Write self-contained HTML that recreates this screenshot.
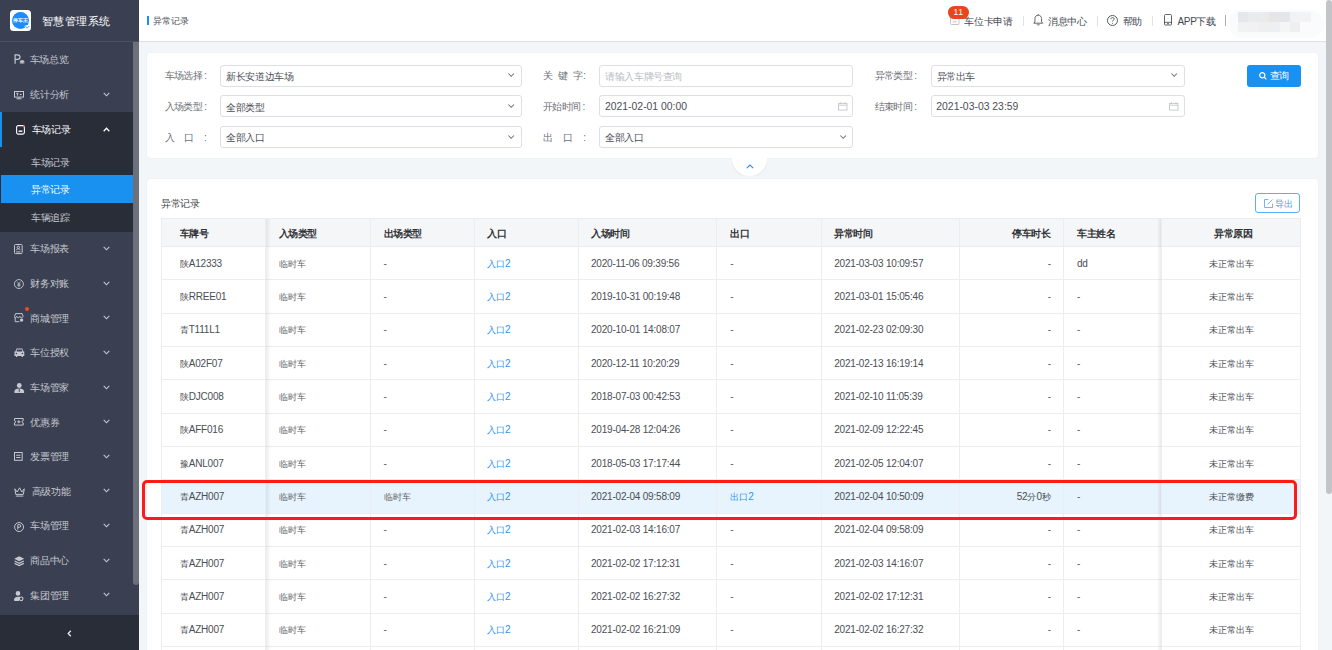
<!DOCTYPE html><html><head><meta charset="utf-8"><title>异常记录</title><style>
*{box-sizing:border-box;margin:0;padding:0}
html,body{width:1332px;height:650px;overflow:hidden;background:#f3f6f9;font-family:"Liberation Sans",sans-serif;}
.a{position:absolute}
.t{position:absolute;white-space:nowrap;line-height:1}
svg{position:absolute;overflow:visible}
.b{font-weight:bold}
</style></head><body>
<div class="a" style="left:0;top:0;width:139px;height:650px;background:#3a3f51"></div>
<div class="a" style="left:0;top:41px;width:139px;height:1px;background:#4b5163"></div>
<div class="a" style="left:10px;top:10px;width:21px;height:21px;background:#fff;border-radius:3.5px"></div>
<div class="a" style="left:11.6px;top:11.6px;width:17.8px;height:17.8px;background:#1a8cff;border-radius:50%"></div>
<div class="t b" style="left:13.2px;top:18.4px;font-size:5px;color:#fff;letter-spacing:-0.1px">停车王</div>
<svg style="left:24.2px;top:24px" width="6.5" height="6" viewBox="0 0 6.5 6"><path d="M0.3 2.2C1.5 0.8 5 0.8 6.2 2.2L3.25 5.8z" fill="#fff"/><path d="M1.2 1.9l2.05 2.3 2.05-2.3" stroke="#1a8cff" stroke-width=".8" fill="none"/></svg>
<div class="t " style="left:42.00px;top:15.77px;font-size:11px;color:#ffffff;letter-spacing:0.48px;">智慧管理系统</div>
<div class="a" style="left:0;top:111.5px;width:139px;height:120.3px;background:#292d38"></div>
<div class="a" style="left:0;top:111.5px;width:1.6px;height:35.3px;background:#1991f0"></div>
<div class="a" style="left:1.2px;top:175px;width:132px;height:28px;background:#1991f0"></div>
<div class="a" style="left:0;top:614.8px;width:139px;height:35.2px;background:#292d38"></div>
<svg style="left:67px;top:629.5px" width="5" height="7" viewBox="0 0 5 7"><path d="M3.8 0.8L1.2 3.5l2.6 2.7" stroke="#e8eaee" stroke-width="1.3" fill="none"/></svg>
<div class="a" style="left:133px;top:42px;width:6px;height:543px;background:#6c707b;border-radius:0 0 3px 3px"></div>
<div class="t " style="left:29.60px;top:54.80px;font-size:10px;color:#c6c9d0;letter-spacing:-0.33px;">车场总览</div>
<svg style="left:14px;top:54px" width="10.5" height="10" viewBox="0 0 10.5 10" fill="none" stroke="#c6c9d0" stroke-width="1"><path d="M1.1 9.8V0.8h2.6a2.3 2.3 0 0 1 0 4.6H1.1" stroke-width="1.2"/><path d="M5.9 9.6V7.6l0.7-1.4h3l0.7 1.4v2z" fill="#c6c9d0" stroke="none"/><circle cx="6.9" cy="8.2" r=".45" fill="#3a3f51" stroke="none"/><circle cx="9.3" cy="8.2" r=".45" fill="#3a3f51" stroke="none"/></svg>
<div class="t " style="left:30.40px;top:90.25px;font-size:10px;color:#c6c9d0;letter-spacing:-0.33px;">统计分析</div>
<svg style="left:13.9px;top:90.8px" width="10" height="8.4" viewBox="0 0 10 8.4" fill="none" stroke="#c6c9d0" stroke-width="1"><rect x="0.5" y="0.5" width="9" height="5.6"/><path d="M2.3 2.3h2.2M3.4 2.3v2.4M5.8 3.5h1.8M5 6.1v1.6M2.5 7.8h5"/></svg>
<svg style="left:103px;top:92.0px" width="7" height="5" viewBox="0 0 7 5"><path d="M0.7 0.9L3.5 3.8l2.8-2.9" stroke="#c6c9d0" stroke-width="1.1" fill="none"/></svg>
<div class="t " style="left:31.80px;top:125.00px;font-size:10px;color:#ffffff;letter-spacing:-0.33px;">车场记录</div>
<svg style="left:16.2px;top:124.7px" width="9" height="9.7" viewBox="0 0 9 9.7" fill="none" stroke="#ffffff" stroke-width="1"><rect x="0.6" y="0.6" width="7.8" height="8.5" rx="1.6" stroke-width="1.1"/><path d="M2.6 6.2h3.8" stroke-width="1.4"/><circle cx="7.6" cy="1.4" r="1" fill="#e05a6a" stroke="none"/></svg>
<svg style="left:103px;top:127.2px" width="7" height="5" viewBox="0 0 7 5"><path d="M0.7 4.2L3.5 1.3l2.8 2.9" stroke="#ffffff" stroke-width="1.3" fill="none"/></svg>
<div class="t " style="left:30.40px;top:244.00px;font-size:10px;color:#c6c9d0;letter-spacing:-0.33px;">车场报表</div>
<svg style="left:14.2px;top:243.8px" width="8.7" height="10.1" viewBox="0 0 8.7 10.1" fill="none" stroke="#c6c9d0" stroke-width="1"><rect x="0.5" y="0.5" width="7.7" height="9.1" rx="1"/><circle cx="4.35" cy="3.3" r="1.2"/><path d="M2.2 6.2c0.4-1 1.2-1.3 2.15-1.3s1.75 0.3 2.15 1.3M2.2 7.9h4.3"/></svg>
<svg style="left:103px;top:245.7px" width="7" height="5" viewBox="0 0 7 5"><path d="M0.7 0.9L3.5 3.8l2.8-2.9" stroke="#c6c9d0" stroke-width="1.1" fill="none"/></svg>
<div class="t " style="left:30.40px;top:279.20px;font-size:10px;color:#c6c9d0;letter-spacing:-0.33px;">财务对账</div>
<svg style="left:13.8px;top:278.8px" width="9.8" height="10.1" viewBox="0 0 9.8 10.1" fill="none" stroke="#c6c9d0" stroke-width="1"><circle cx="4.9" cy="5.05" r="4.5" stroke-width=".9"/><path d="M3.2 2.6l1.7 2.3 1.7-2.3M4.9 4.9v3.3M3.3 5.3h3.2M3.3 6.7h3.2" stroke-width=".75"/></svg>
<svg style="left:103px;top:280.9px" width="7" height="5" viewBox="0 0 7 5"><path d="M0.7 0.9L3.5 3.8l2.8-2.9" stroke="#c6c9d0" stroke-width="1.1" fill="none"/></svg>
<div class="t " style="left:30.40px;top:313.70px;font-size:10px;color:#c6c9d0;letter-spacing:-0.33px;">商城管理</div>
<svg style="left:14.2px;top:313.4px" width="9.7" height="9.2" viewBox="0 0 9.7 9.2" fill="none" stroke="#c6c9d0" stroke-width="1"><path d="M0.6 3.3L1.6 0.6h6.5l1 2.7c0 0.9-0.8 1.4-1.6 1.4s-1.6-0.5-1.6-1.4c0 0.9-0.8 1.4-1.6 1.4s-1.6-0.5-1.6-1.4c0 0.9-0.8 1.4-1.6 1.4S0.6 4.2 0.6 3.3z"/><path d="M1.2 4.8v3.9h4.2"/><circle cx="7.6" cy="7.1" r="1.7" fill="#c6c9d0" stroke="none"/></svg>
<svg style="left:103px;top:315.4px" width="7" height="5" viewBox="0 0 7 5"><path d="M0.7 0.9L3.5 3.8l2.8-2.9" stroke="#c6c9d0" stroke-width="1.1" fill="none"/></svg>
<div class="t " style="left:30.40px;top:348.30px;font-size:10px;color:#c6c9d0;letter-spacing:-0.33px;">车位授权</div>
<svg style="left:13.5px;top:348px" width="10.8" height="9.1" viewBox="0 0 10.8 9.1" fill="none" stroke="#c6c9d0" stroke-width="1"><path d="M1.4 3.4L2.5 0.6h5.8l1.1 2.8h0.9v4.5H8.9v1.2H7.5V7.9H3.3v1.2H1.9V7.9H0.5V3.4z" fill="#c6c9d0" stroke="none"/><rect x="2.7" y="1.5" width="5.4" height="2" fill="#3a3f51" stroke="none"/><circle cx="2.4" cy="5.5" r=".8" fill="#3a3f51" stroke="none"/><circle cx="8.4" cy="5.5" r=".8" fill="#3a3f51" stroke="none"/></svg>
<svg style="left:103px;top:350.0px" width="7" height="5" viewBox="0 0 7 5"><path d="M0.7 0.9L3.5 3.8l2.8-2.9" stroke="#c6c9d0" stroke-width="1.1" fill="none"/></svg>
<div class="t " style="left:30.40px;top:382.90px;font-size:10px;color:#c6c9d0;letter-spacing:-0.33px;">车场管家</div>
<svg style="left:13.8px;top:382.5px" width="10.5" height="10.1" viewBox="0 0 10.5 10.1" fill="none" stroke="#c6c9d0" stroke-width="1"><circle cx="5.25" cy="2.5" r="2.4" fill="#c6c9d0" stroke="none"/><path d="M0.4 10.1V8.4c0-1.7 2-2.8 4.85-2.8s4.85 1.1 4.85 2.8v1.7z" fill="#c6c9d0" stroke="none"/><path d="M5.25 5.8v3.4" stroke="#3a3f51" stroke-width=".9"/></svg>
<svg style="left:103px;top:384.6px" width="7" height="5" viewBox="0 0 7 5"><path d="M0.7 0.9L3.5 3.8l2.8-2.9" stroke="#c6c9d0" stroke-width="1.1" fill="none"/></svg>
<div class="t " style="left:30.40px;top:417.50px;font-size:10px;color:#c6c9d0;letter-spacing:-0.33px;">优惠券</div>
<svg style="left:13.8px;top:418.2px" width="9.7" height="7.6" viewBox="0 0 9.7 7.6" fill="none" stroke="#c6c9d0" stroke-width="1"><path d="M0.5 0.5h8.7v2.2a1.1 1.1 0 0 0 0 2.2v2.2H0.5V4.9a1.1 1.1 0 0 0 0-2.2z"/><path d="M3.2 3.8h3.3M4.85 2.3v3"/></svg>
<svg style="left:103px;top:419.2px" width="7" height="5" viewBox="0 0 7 5"><path d="M0.7 0.9L3.5 3.8l2.8-2.9" stroke="#c6c9d0" stroke-width="1.1" fill="none"/></svg>
<div class="t " style="left:30.40px;top:452.20px;font-size:10px;color:#c6c9d0;letter-spacing:-0.33px;">发票管理</div>
<svg style="left:14.2px;top:452.2px" width="8.7" height="8.8" viewBox="0 0 8.7 8.8" fill="none" stroke="#c6c9d0" stroke-width="1"><rect x="0.5" y="0.5" width="7.7" height="7.8"/><path d="M2.2 3.2h4.3M2.2 5.5h4.3"/></svg>
<svg style="left:103px;top:453.9px" width="7" height="5" viewBox="0 0 7 5"><path d="M0.7 0.9L3.5 3.8l2.8-2.9" stroke="#c6c9d0" stroke-width="1.1" fill="none"/></svg>
<div class="t " style="left:31.50px;top:486.70px;font-size:10px;color:#c6c9d0;letter-spacing:-0.33px;">高级功能</div>
<svg style="left:13.8px;top:487px" width="11.1" height="9.7" viewBox="0 0 11.1 9.7" fill="none" stroke="#c6c9d0" stroke-width="1"><path d="M0.8 1.8L3.2 5l2.35-4.2L7.9 5l2.4-3.2-1 5.6H1.8z"/><path d="M1.8 9.1h7.5"/></svg>
<svg style="left:103px;top:488.4px" width="7" height="5" viewBox="0 0 7 5"><path d="M0.7 0.9L3.5 3.8l2.8-2.9" stroke="#c6c9d0" stroke-width="1.1" fill="none"/></svg>
<div class="t " style="left:30.40px;top:521.40px;font-size:10px;color:#c6c9d0;letter-spacing:-0.33px;">车场管理</div>
<svg style="left:13.8px;top:521.6px" width="10.1" height="10.1" viewBox="0 0 10.1 10.1" fill="none" stroke="#c6c9d0" stroke-width="1"><circle cx="5.05" cy="5.05" r="4.5"/><path d="M3.8 7.6V2.6h1.6a1.35 1.35 0 0 1 0 2.7H3.8"/></svg>
<svg style="left:103px;top:523.1px" width="7" height="5" viewBox="0 0 7 5"><path d="M0.7 0.9L3.5 3.8l2.8-2.9" stroke="#c6c9d0" stroke-width="1.1" fill="none"/></svg>
<div class="t " style="left:30.40px;top:556.00px;font-size:10px;color:#c6c9d0;letter-spacing:-0.33px;">商品中心</div>
<svg style="left:13.8px;top:556.2px" width="10.4" height="10" viewBox="0 0 10.4 10" fill="none" stroke="#c6c9d0" stroke-width="1"><path d="M5.2 0.3l5 2.5-5 2.5-5-2.5z" fill="#c6c9d0" stroke="none"/><path d="M0.6 5l4.6 2.3L9.8 5" stroke-width="1.3"/><path d="M0.6 7.3l4.6 2.3 4.6-2.3" stroke-width="1.3"/></svg>
<svg style="left:103px;top:557.7px" width="7" height="5" viewBox="0 0 7 5"><path d="M0.7 0.9L3.5 3.8l2.8-2.9" stroke="#c6c9d0" stroke-width="1.1" fill="none"/></svg>
<div class="t " style="left:30.40px;top:590.60px;font-size:10px;color:#c6c9d0;letter-spacing:-0.33px;">集团管理</div>
<svg style="left:13.8px;top:590.8px" width="9.6" height="10" viewBox="0 0 9.6 10" fill="none" stroke="#c6c9d0" stroke-width="1"><circle cx="4" cy="2.4" r="2.3" fill="#c6c9d0" stroke="none"/><path d="M0.2 10V8.3c0-1.6 1.7-2.6 3.8-2.6 0.8 0 1.5 0.1 2.1 0.4L5 10z" fill="#c6c9d0" stroke="none"/><circle cx="7.2" cy="7.8" r="1.8" stroke-width="1.1"/></svg>
<svg style="left:103px;top:592.3px" width="7" height="5" viewBox="0 0 7 5"><path d="M0.7 0.9L3.5 3.8l2.8-2.9" stroke="#c6c9d0" stroke-width="1.1" fill="none"/></svg>
<div class="a" style="left:24.9px;top:306.7px;width:4.3px;height:4.3px;border-radius:50%;background:#f04a23"></div>
<div class="t " style="left:31.30px;top:157.60px;font-size:10px;color:#c6c9d0;letter-spacing:-0.5px;">车场记录</div>
<div class="t " style="left:31.30px;top:185.15px;font-size:10px;color:#ffffff;letter-spacing:-0.5px;">异常记录</div>
<div class="t " style="left:31.30px;top:213.40px;font-size:10px;color:#c6c9d0;letter-spacing:-0.5px;">车辆追踪</div>
<div class="a" style="left:139px;top:0;width:1193px;height:41px;background:#fff"></div>
<div class="a" style="left:139px;top:41px;width:1193px;height:1px;background:#dde1e6"></div>
<div class="a" style="left:147px;top:16px;width:2px;height:9px;background:#1991f0"></div>
<div class="t " style="left:152.50px;top:16.68px;font-size:9px;color:#50535a;letter-spacing:0.13px;">异常记录</div>
<div class="t " style="left:964.30px;top:16.55px;font-size:10px;color:#444851;letter-spacing:-0.35px;">车位卡申请</div>
<div class="t " style="left:1048.00px;top:16.55px;font-size:10px;color:#444851;letter-spacing:-0.35px;">消息中心</div>
<div class="t " style="left:1122.60px;top:16.55px;font-size:10px;color:#444851;letter-spacing:-0.35px;">帮助</div>
<div class="t " style="left:1177.50px;top:16.55px;font-size:10px;color:#444851;letter-spacing:-0.35px;">APP下载</div>
<div class="a" style="left:1022.7px;top:15.5px;width:1px;height:10px;background:#dfe2e6"></div>
<div class="a" style="left:1097.4px;top:15.5px;width:1px;height:10px;background:#dfe2e6"></div>
<div class="a" style="left:1151.9px;top:15.5px;width:1px;height:10px;background:#dfe2e6"></div>
<div class="a" style="left:1225px;top:15px;width:1px;height:10.6px;background:#a9acb1"></div>
<svg style="left:949.7px;top:16.8px" width="9.5" height="8" viewBox="0 0 9.5 8" fill="none" stroke="#c2c5cb" stroke-width="1"><rect x="0.5" y="0.5" width="8.5" height="7" rx="1"/><path d="M2.5 4.8h4"/></svg>
<svg style="left:1033px;top:14.2px" width="10.5" height="11.5" viewBox="0 0 10.5 11.5" fill="none" stroke="#444851" stroke-width=".85"><path d="M5.25 1.2c-2 0-3.3 1.4-3.3 3.4v3.2L0.8 9.2h8.9L8.55 7.8V4.6c0-2-1.3-3.4-3.3-3.4z"/><path d="M5.25 0.3v0.9M4 10.2c0.3 0.6 0.7 0.9 1.25 0.9s0.95-0.3 1.25-0.9"/></svg>
<svg style="left:1107px;top:14.8px" width="11" height="11" viewBox="0 0 11 11" fill="none" stroke="#444851" stroke-width=".9"><circle cx="5.5" cy="5.5" r="5"/><path d="M3.9 4.2c0-1 0.7-1.6 1.6-1.6s1.6 0.6 1.6 1.4c0 1.2-1.5 1.2-1.5 2.5"/><circle cx="5.6" cy="8.2" r=".5" fill="#444851" stroke="none"/></svg>
<svg style="left:1163.6px;top:14.3px" width="8" height="11.5" viewBox="0 0 8 11.5" fill="none" stroke="#444851" stroke-width=".85"><rect x="0.5" y="0.5" width="7" height="10.5" rx="1"/><path d="M0.5 8.3h7M3 9.7h2"/></svg>
<div class="a" style="left:948.2px;top:5.9px;width:20.5px;height:12.9px;background:#e8461e;border-radius:6.4px"></div>
<div class="t" style="left:953.6px;top:8.2px;font-size:8.6px;color:#fff;letter-spacing:0.6px">11</div>
<div class="a" style="left:1228px;top:10px;width:96px;height:28px;background:#fafbfc;border-radius:14px"></div>
<div class="a" style="left:1238.0px;top:12px;width:10.5px;height:10px;background:#e6e7ea"></div>
<div class="a" style="left:1238.0px;top:22px;width:10.5px;height:10px;background:#f1f2f3"></div>
<div class="a" style="left:1248.4px;top:12px;width:10.5px;height:10px;background:#eaebed"></div>
<div class="a" style="left:1248.4px;top:22px;width:10.5px;height:10px;background:#f1f1f3"></div>
<div class="a" style="left:1258.8px;top:12px;width:10.5px;height:10px;background:#ebebed"></div>
<div class="a" style="left:1258.8px;top:22px;width:10.5px;height:10px;background:#efeff0"></div>
<div class="a" style="left:1269.2px;top:12px;width:10.5px;height:10px;background:#e6e6e7"></div>
<div class="a" style="left:1269.2px;top:22px;width:10.5px;height:10px;background:#eeeff0"></div>
<div class="a" style="left:1279.6px;top:12px;width:10.5px;height:10px;background:#e4e7ea"></div>
<div class="a" style="left:1279.6px;top:22px;width:10.5px;height:10px;background:#f4f5f6"></div>
<div class="a" style="left:1290.0px;top:12px;width:10.5px;height:10px;background:#f1f2f3"></div>
<div class="a" style="left:1290.0px;top:22px;width:10.5px;height:10px;background:#eeeff0"></div>
<div class="a" style="left:1300.4px;top:12px;width:10.5px;height:10px;background:#f3f3f4"></div>
<div class="a" style="left:1300.4px;top:22px;width:10.5px;height:10px;background:#fbfbfc"></div>
<div class="a" style="left:1326.2px;top:0;width:5.8px;height:494.3px;background:#c2c4c7;border-radius:3px"></div>
<div class="a" style="left:147px;top:53px;width:1171px;height:105px;background:#fff;border-radius:4px;box-shadow:0 0 2px rgba(40,60,90,.07)"></div>
<div class="t " style="left:164.60px;top:71.40px;font-size:10px;color:#6c6f75;letter-spacing:-0.55px;">车场选择</div>
<div class="t " style="left:204.20px;top:71.40px;font-size:10px;color:#6c6f75;letter-spacing:-0.55px;">:</div>
<div class="t " style="left:543.00px;top:71.40px;font-size:10px;color:#6c6f75;letter-spacing:-0.55px;">关</div>
<div class="t " style="left:558.20px;top:71.40px;font-size:10px;color:#6c6f75;letter-spacing:-0.55px;">键</div>
<div class="t " style="left:572.70px;top:71.40px;font-size:10px;color:#6c6f75;letter-spacing:-0.55px;">字</div>
<div class="t " style="left:583.20px;top:71.40px;font-size:10px;color:#6c6f75;letter-spacing:-0.55px;">:</div>
<div class="t " style="left:874.60px;top:71.40px;font-size:10px;color:#6c6f75;letter-spacing:-0.55px;">异常类型</div>
<div class="t " style="left:914.20px;top:71.40px;font-size:10px;color:#6c6f75;letter-spacing:-0.55px;">:</div>
<div class="t " style="left:164.60px;top:102.10px;font-size:10px;color:#6c6f75;letter-spacing:-0.55px;">入场类型</div>
<div class="t " style="left:204.20px;top:102.10px;font-size:10px;color:#6c6f75;letter-spacing:-0.55px;">:</div>
<div class="t " style="left:543.00px;top:102.10px;font-size:10px;color:#6c6f75;letter-spacing:-0.55px;">开始时间</div>
<div class="t " style="left:582.60px;top:102.10px;font-size:10px;color:#6c6f75;letter-spacing:-0.55px;">:</div>
<div class="t " style="left:874.60px;top:102.10px;font-size:10px;color:#6c6f75;letter-spacing:-0.55px;">结束时间</div>
<div class="t " style="left:914.20px;top:102.10px;font-size:10px;color:#6c6f75;letter-spacing:-0.55px;">:</div>
<div class="t " style="left:164.60px;top:132.60px;font-size:10px;color:#6c6f75;letter-spacing:-0.55px;">入</div>
<div class="t " style="left:183.80px;top:132.60px;font-size:10px;color:#6c6f75;letter-spacing:-0.55px;">口</div>
<div class="t " style="left:203.90px;top:132.60px;font-size:10px;color:#6c6f75;letter-spacing:-0.55px;">:</div>
<div class="t " style="left:543.00px;top:132.60px;font-size:10px;color:#6c6f75;letter-spacing:-0.55px;">出</div>
<div class="t " style="left:562.80px;top:132.60px;font-size:10px;color:#6c6f75;letter-spacing:-0.55px;">口</div>
<div class="t " style="left:583.20px;top:132.60px;font-size:10px;color:#6c6f75;letter-spacing:-0.55px;">:</div>
<div class="a" style="left:220.3px;top:64.5px;width:301.5px;height:22px;border:1px solid #dcdfe6;border-radius:3px;background:#fff"></div>
<div class="t " style="left:226.30px;top:71.80px;font-size:10px;color:#4a4d53;letter-spacing:-0.4px;">新长安道边车场</div>
<svg style="left:508.0px;top:73.4px" width="6.4" height="4" viewBox="0 0 6.4 4"><path d="M0.4 0.5L3.2 3.3l2.8-2.8" stroke="#6f7279" stroke-width="1.05" fill="none"/></svg>
<div class="a" style="left:599.2px;top:64.5px;width:254.3px;height:22px;border:1px solid #dcdfe6;border-radius:3px;background:#fff"></div>
<div class="t " style="left:605.20px;top:71.80px;font-size:10px;color:#b9bcc2;letter-spacing:-0.4px;">请输入车牌号查询</div>
<div class="a" style="left:930.5px;top:64.5px;width:254.1px;height:22px;border:1px solid #dcdfe6;border-radius:3px;background:#fff"></div>
<div class="t " style="left:936.50px;top:71.80px;font-size:10px;color:#4a4d53;letter-spacing:-0.4px;">异常出车</div>
<svg style="left:1170.8px;top:73.4px" width="6.4" height="4" viewBox="0 0 6.4 4"><path d="M0.4 0.5L3.2 3.3l2.8-2.8" stroke="#6f7279" stroke-width="1.05" fill="none"/></svg>
<div class="a" style="left:220.3px;top:95.2px;width:301.5px;height:22px;border:1px solid #dcdfe6;border-radius:3px;background:#fff"></div>
<div class="t " style="left:226.30px;top:102.50px;font-size:10px;color:#4a4d53;letter-spacing:-0.4px;">全部类型</div>
<svg style="left:508.0px;top:104.1px" width="6.4" height="4" viewBox="0 0 6.4 4"><path d="M0.4 0.5L3.2 3.3l2.8-2.8" stroke="#6f7279" stroke-width="1.05" fill="none"/></svg>
<div class="a" style="left:599.2px;top:95.2px;width:254.3px;height:22px;border:1px solid #dcdfe6;border-radius:3px;background:#fff"></div>
<div class="t " style="left:605.00px;top:102.01px;font-size:10.4px;color:#4a4d53;">2021-02-01 00:00</div>
<svg style="left:838.2px;top:101.9px" width="9.5" height="8.6" viewBox="0 0 9.5 8.6" fill="none" stroke="#c4c7cd" stroke-width=".9"><rect x="0.5" y="1.4" width="8.5" height="6.7"/><path d="M0.5 3.2h8.5M2.5 0.2v1.8M7 0.2v1.8"/></svg>
<div class="a" style="left:930.5px;top:95.2px;width:254.1px;height:22px;border:1px solid #dcdfe6;border-radius:3px;background:#fff"></div>
<div class="t " style="left:936.30px;top:102.01px;font-size:10.4px;color:#4a4d53;">2021-03-03 23:59</div>
<svg style="left:1169.3px;top:101.9px" width="9.5" height="8.6" viewBox="0 0 9.5 8.6" fill="none" stroke="#c4c7cd" stroke-width=".9"><rect x="0.5" y="1.4" width="8.5" height="6.7"/><path d="M0.5 3.2h8.5M2.5 0.2v1.8M7 0.2v1.8"/></svg>
<div class="a" style="left:220.3px;top:125.7px;width:301.5px;height:22px;border:1px solid #dcdfe6;border-radius:3px;background:#fff"></div>
<div class="t " style="left:226.30px;top:133.00px;font-size:10px;color:#4a4d53;letter-spacing:-0.4px;">全部入口</div>
<svg style="left:508.0px;top:134.6px" width="6.4" height="4" viewBox="0 0 6.4 4"><path d="M0.4 0.5L3.2 3.3l2.8-2.8" stroke="#6f7279" stroke-width="1.05" fill="none"/></svg>
<div class="a" style="left:599.2px;top:125.7px;width:254.3px;height:22px;border:1px solid #dcdfe6;border-radius:3px;background:#fff"></div>
<div class="t " style="left:605.20px;top:133.00px;font-size:10px;color:#4a4d53;letter-spacing:-0.4px;">全部入口</div>
<svg style="left:839.7px;top:134.6px" width="6.4" height="4" viewBox="0 0 6.4 4"><path d="M0.4 0.5L3.2 3.3l2.8-2.8" stroke="#6f7279" stroke-width="1.05" fill="none"/></svg>
<div class="a" style="left:1247px;top:64.5px;width:54px;height:22px;background:#1991f0;border-radius:3px"></div>
<svg style="left:1258.8px;top:71.5px" width="8" height="8" viewBox="0 0 8 8" fill="none" stroke="#fff" stroke-width="1.2"><circle cx="3.3" cy="3.3" r="2.6"/><path d="M5.2 5.2L7.3 7.3"/></svg>
<div class="t " style="left:1269.60px;top:71.40px;font-size:10px;color:#fff;letter-spacing:-0.6px;">查询</div>
<div class="a" style="left:732.3px;top:158px;width:35px;height:17.8px;overflow:hidden"><div style="position:absolute;left:0;top:-17.5px;width:35px;height:35px;border-radius:50%;background:#fff;box-shadow:0 0 3px rgba(0,0,0,.10)"></div></div>
<div class="a" style="left:732.3px;top:157px;width:35px;height:2px;background:#fff"></div>
<svg style="left:746.3px;top:163.8px" width="8" height="5" viewBox="0 0 8 5"><path d="M0.8 4.2L4 1l3.2 3.2" stroke="#2a8df5" stroke-width="1.1" fill="none"/></svg>
<div class="a" style="left:147px;top:179px;width:1171px;height:480px;background:#fff;border-radius:4px;box-shadow:0 0 2px rgba(40,60,90,.07)"></div>
<div class="t " style="left:161.20px;top:198.70px;font-size:10px;color:#3a3d42;letter-spacing:-0.4px;">异常记录</div>
<div class="a" style="left:1255.4px;top:193.2px;width:45.1px;height:20.3px;border:1px solid #5aadff;border-radius:3px;background:#fff"></div>
<svg style="left:1264px;top:199.2px" width="9" height="9" viewBox="0 0 9 9" fill="none" stroke="#6aaaf0" stroke-width=".9"><path d="M4.3 0.5H0.5v8h8V4.7"/><path d="M3.6 5.4L8.5 0.5"/></svg>
<div class="t " style="left:1275.30px;top:199.58px;font-size:9px;color:#3d9bf6;letter-spacing:-0.6px;">导出</div>
<div class="a" style="left:161.4px;top:218.6px;width:1139.1px;height:27.7px;background:#f5f6f8"></div>
<div class="a" style="left:161.4px;top:479.6px;width:1139.1px;height:33.3px;background:#e7f3fd"></div>
<div class="a" style="left:160.9px;top:218.1px;width:1140.1px;height:1px;background:#ebedf1"></div>
<div class="a" style="left:160.9px;top:245.8px;width:1140.1px;height:1px;background:#ebedf1"></div>
<div class="a" style="left:160.9px;top:279.1px;width:1140.1px;height:1px;background:#ebedf1"></div>
<div class="a" style="left:160.9px;top:312.5px;width:1140.1px;height:1px;background:#ebedf1"></div>
<div class="a" style="left:160.9px;top:345.8px;width:1140.1px;height:1px;background:#ebedf1"></div>
<div class="a" style="left:160.9px;top:379.1px;width:1140.1px;height:1px;background:#ebedf1"></div>
<div class="a" style="left:160.9px;top:412.5px;width:1140.1px;height:1px;background:#ebedf1"></div>
<div class="a" style="left:160.9px;top:445.8px;width:1140.1px;height:1px;background:#ebedf1"></div>
<div class="a" style="left:160.9px;top:479.1px;width:1140.1px;height:1px;background:#ebedf1"></div>
<div class="a" style="left:160.9px;top:512.5px;width:1140.1px;height:1px;background:#ebedf1"></div>
<div class="a" style="left:160.9px;top:545.8px;width:1140.1px;height:1px;background:#ebedf1"></div>
<div class="a" style="left:160.9px;top:579.1px;width:1140.1px;height:1px;background:#ebedf1"></div>
<div class="a" style="left:160.9px;top:612.5px;width:1140.1px;height:1px;background:#ebedf1"></div>
<div class="a" style="left:160.9px;top:645.8px;width:1140.1px;height:1px;background:#ebedf1"></div>
<div class="a" style="left:160.9px;top:679.1px;width:1140.1px;height:1px;background:#ebedf1"></div>
<div class="a" style="left:160.9px;top:218.1px;width:1px;height:450px;background:#ebedf1"></div>
<div class="a" style="left:264.7px;top:218.1px;width:1px;height:450px;background:#ebedf1"></div>
<div class="a" style="left:369.8px;top:218.1px;width:1px;height:450px;background:#ebedf1"></div>
<div class="a" style="left:473.8px;top:218.1px;width:1px;height:450px;background:#ebedf1"></div>
<div class="a" style="left:577.7px;top:218.1px;width:1px;height:450px;background:#ebedf1"></div>
<div class="a" style="left:716.3px;top:218.1px;width:1px;height:450px;background:#ebedf1"></div>
<div class="a" style="left:820.9px;top:218.1px;width:1px;height:450px;background:#ebedf1"></div>
<div class="a" style="left:958.9px;top:218.1px;width:1px;height:450px;background:#ebedf1"></div>
<div class="a" style="left:1063.0px;top:218.1px;width:1px;height:450px;background:#ebedf1"></div>
<div class="a" style="left:1160.9px;top:218.1px;width:1px;height:450px;background:#ebedf1"></div>
<div class="a" style="left:1300.0px;top:218.1px;width:1px;height:450px;background:#ebedf1"></div>
<div class="a" style="left:265.7px;top:218.6px;width:5px;height:450px;background:linear-gradient(to right,rgba(0,0,0,.07),rgba(0,0,0,0))"></div>
<div class="a" style="left:1156.9px;top:218.6px;width:4px;height:450px;background:linear-gradient(to left,rgba(0,0,0,.08),rgba(0,0,0,0))"></div>
<div class="t b" style="left:179.70px;top:228.90px;font-size:10px;color:#2f3135;letter-spacing:-0.35px;">车牌号</div>
<div class="t b" style="left:278.50px;top:228.90px;font-size:10px;color:#2f3135;letter-spacing:-0.35px;">入场类型</div>
<div class="t b" style="left:383.50px;top:228.90px;font-size:10px;color:#2f3135;letter-spacing:-0.35px;">出场类型</div>
<div class="t b" style="left:487.10px;top:228.90px;font-size:10px;color:#2f3135;letter-spacing:-0.35px;">入口</div>
<div class="t b" style="left:591.00px;top:228.90px;font-size:10px;color:#2f3135;letter-spacing:-0.35px;">入场时间</div>
<div class="t b" style="left:730.30px;top:228.90px;font-size:10px;color:#2f3135;letter-spacing:-0.35px;">出口</div>
<div class="t b" style="left:834.20px;top:228.90px;font-size:10px;color:#2f3135;letter-spacing:-0.35px;">异常时间</div>
<div class="t b" style="left:959.4px;width:91.4px;text-align:right;top:229.09px;font-size:10px;letter-spacing:-0.35px;color:#2f3135">停车时长</div>
<div class="t b" style="left:1077.00px;top:228.90px;font-size:10px;color:#2f3135;letter-spacing:-0.35px;">车主姓名</div>
<div class="t b" style="left:1163.9px;width:139.1px;text-align:center;top:229.09px;font-size:10px;letter-spacing:-0.35px;color:#2f3135">异常原因</div>
<div class="t " style="left:179.70px;top:258.77px;font-size:10px;color:#4b4e54;letter-spacing:-0.2px;"><span style="font-size:9px;letter-spacing:0">陕</span>A12333</div>
<div class="t " style="left:278.50px;top:258.77px;font-size:10px;color:#5f6268;letter-spacing:-0.2px;"><span style="font-size:9px;letter-spacing:0">临时车</span></div>
<div class="t " style="left:383.50px;top:258.77px;font-size:10px;color:#5a5d63;letter-spacing:-0.2px;">-</div>
<div class="t " style="left:487.10px;top:258.77px;font-size:10px;color:#2d93f5;letter-spacing:-0.2px;"><span style="font-size:9px;letter-spacing:0">入口</span>2</div>
<div class="t " style="left:591.00px;top:258.77px;font-size:10px;color:#4b4e54;letter-spacing:-0.2px;">2020-11-06 09:39:56</div>
<div class="t " style="left:730.30px;top:258.77px;font-size:10px;color:#5a5d63;letter-spacing:-0.2px;">-</div>
<div class="t " style="left:834.20px;top:258.77px;font-size:10px;color:#4b4e54;letter-spacing:-0.2px;">2021-03-03 10:09:57</div>
<div class="t" style="left:959.4px;width:91.4px;text-align:right;top:258.77px;font-size:10px;letter-spacing:-0.2px;color:#5a5d63">-</div>
<div class="t " style="left:1077.00px;top:258.77px;font-size:10px;color:#4b4e54;letter-spacing:-0.2px;">dd</div>
<div class="t" style="left:1161.6px;width:139.1px;text-align:center;top:258.77px;font-size:10px;letter-spacing:-0.2px;color:#4b4e54"><span style="font-size:9px;letter-spacing:0">未正常出车</span></div>
<div class="t " style="left:179.70px;top:292.10px;font-size:10px;color:#4b4e54;letter-spacing:-0.2px;"><span style="font-size:9px;letter-spacing:0">陕</span>RREE01</div>
<div class="t " style="left:278.50px;top:292.10px;font-size:10px;color:#5f6268;letter-spacing:-0.2px;"><span style="font-size:9px;letter-spacing:0">临时车</span></div>
<div class="t " style="left:383.50px;top:292.10px;font-size:10px;color:#5a5d63;letter-spacing:-0.2px;">-</div>
<div class="t " style="left:487.10px;top:292.10px;font-size:10px;color:#2d93f5;letter-spacing:-0.2px;"><span style="font-size:9px;letter-spacing:0">入口</span>2</div>
<div class="t " style="left:591.00px;top:292.10px;font-size:10px;color:#4b4e54;letter-spacing:-0.2px;">2019-10-31 00:19:48</div>
<div class="t " style="left:730.30px;top:292.10px;font-size:10px;color:#5a5d63;letter-spacing:-0.2px;">-</div>
<div class="t " style="left:834.20px;top:292.10px;font-size:10px;color:#4b4e54;letter-spacing:-0.2px;">2021-03-01 15:05:46</div>
<div class="t" style="left:959.4px;width:91.4px;text-align:right;top:292.10px;font-size:10px;letter-spacing:-0.2px;color:#5a5d63">-</div>
<div class="t " style="left:1077.00px;top:292.10px;font-size:10px;color:#5a5d63;letter-spacing:-0.2px;">-</div>
<div class="t" style="left:1161.6px;width:139.1px;text-align:center;top:292.10px;font-size:10px;letter-spacing:-0.2px;color:#4b4e54"><span style="font-size:9px;letter-spacing:0">未正常出车</span></div>
<div class="t " style="left:179.70px;top:325.43px;font-size:10px;color:#4b4e54;letter-spacing:-0.2px;"><span style="font-size:9px;letter-spacing:0">青</span>T111L1</div>
<div class="t " style="left:278.50px;top:325.43px;font-size:10px;color:#5f6268;letter-spacing:-0.2px;"><span style="font-size:9px;letter-spacing:0">临时车</span></div>
<div class="t " style="left:383.50px;top:325.43px;font-size:10px;color:#5a5d63;letter-spacing:-0.2px;">-</div>
<div class="t " style="left:487.10px;top:325.43px;font-size:10px;color:#2d93f5;letter-spacing:-0.2px;"><span style="font-size:9px;letter-spacing:0">入口</span>2</div>
<div class="t " style="left:591.00px;top:325.43px;font-size:10px;color:#4b4e54;letter-spacing:-0.2px;">2020-10-01 14:08:07</div>
<div class="t " style="left:730.30px;top:325.43px;font-size:10px;color:#5a5d63;letter-spacing:-0.2px;">-</div>
<div class="t " style="left:834.20px;top:325.43px;font-size:10px;color:#4b4e54;letter-spacing:-0.2px;">2021-02-23 02:09:30</div>
<div class="t" style="left:959.4px;width:91.4px;text-align:right;top:325.43px;font-size:10px;letter-spacing:-0.2px;color:#5a5d63">-</div>
<div class="t " style="left:1077.00px;top:325.43px;font-size:10px;color:#5a5d63;letter-spacing:-0.2px;">-</div>
<div class="t" style="left:1161.6px;width:139.1px;text-align:center;top:325.43px;font-size:10px;letter-spacing:-0.2px;color:#4b4e54"><span style="font-size:9px;letter-spacing:0">未正常出车</span></div>
<div class="t " style="left:179.70px;top:358.77px;font-size:10px;color:#4b4e54;letter-spacing:-0.2px;"><span style="font-size:9px;letter-spacing:0">陕</span>A02F07</div>
<div class="t " style="left:278.50px;top:358.77px;font-size:10px;color:#5f6268;letter-spacing:-0.2px;"><span style="font-size:9px;letter-spacing:0">临时车</span></div>
<div class="t " style="left:383.50px;top:358.77px;font-size:10px;color:#5a5d63;letter-spacing:-0.2px;">-</div>
<div class="t " style="left:487.10px;top:358.77px;font-size:10px;color:#2d93f5;letter-spacing:-0.2px;"><span style="font-size:9px;letter-spacing:0">入口</span>2</div>
<div class="t " style="left:591.00px;top:358.77px;font-size:10px;color:#4b4e54;letter-spacing:-0.2px;">2020-12-11 10:20:29</div>
<div class="t " style="left:730.30px;top:358.77px;font-size:10px;color:#5a5d63;letter-spacing:-0.2px;">-</div>
<div class="t " style="left:834.20px;top:358.77px;font-size:10px;color:#4b4e54;letter-spacing:-0.2px;">2021-02-13 16:19:14</div>
<div class="t" style="left:959.4px;width:91.4px;text-align:right;top:358.77px;font-size:10px;letter-spacing:-0.2px;color:#5a5d63">-</div>
<div class="t " style="left:1077.00px;top:358.77px;font-size:10px;color:#5a5d63;letter-spacing:-0.2px;">-</div>
<div class="t" style="left:1161.6px;width:139.1px;text-align:center;top:358.77px;font-size:10px;letter-spacing:-0.2px;color:#4b4e54"><span style="font-size:9px;letter-spacing:0">未正常出车</span></div>
<div class="t " style="left:179.70px;top:392.10px;font-size:10px;color:#4b4e54;letter-spacing:-0.2px;"><span style="font-size:9px;letter-spacing:0">陕</span>DJC008</div>
<div class="t " style="left:278.50px;top:392.10px;font-size:10px;color:#5f6268;letter-spacing:-0.2px;"><span style="font-size:9px;letter-spacing:0">临时车</span></div>
<div class="t " style="left:383.50px;top:392.10px;font-size:10px;color:#5a5d63;letter-spacing:-0.2px;">-</div>
<div class="t " style="left:487.10px;top:392.10px;font-size:10px;color:#2d93f5;letter-spacing:-0.2px;"><span style="font-size:9px;letter-spacing:0">入口</span>2</div>
<div class="t " style="left:591.00px;top:392.10px;font-size:10px;color:#4b4e54;letter-spacing:-0.2px;">2018-07-03 00:42:53</div>
<div class="t " style="left:730.30px;top:392.10px;font-size:10px;color:#5a5d63;letter-spacing:-0.2px;">-</div>
<div class="t " style="left:834.20px;top:392.10px;font-size:10px;color:#4b4e54;letter-spacing:-0.2px;">2021-02-10 11:05:39</div>
<div class="t" style="left:959.4px;width:91.4px;text-align:right;top:392.10px;font-size:10px;letter-spacing:-0.2px;color:#5a5d63">-</div>
<div class="t " style="left:1077.00px;top:392.10px;font-size:10px;color:#5a5d63;letter-spacing:-0.2px;">-</div>
<div class="t" style="left:1161.6px;width:139.1px;text-align:center;top:392.10px;font-size:10px;letter-spacing:-0.2px;color:#4b4e54"><span style="font-size:9px;letter-spacing:0">未正常出车</span></div>
<div class="t " style="left:179.70px;top:425.43px;font-size:10px;color:#4b4e54;letter-spacing:-0.2px;"><span style="font-size:9px;letter-spacing:0">陕</span>AFF016</div>
<div class="t " style="left:278.50px;top:425.43px;font-size:10px;color:#5f6268;letter-spacing:-0.2px;"><span style="font-size:9px;letter-spacing:0">临时车</span></div>
<div class="t " style="left:383.50px;top:425.43px;font-size:10px;color:#5a5d63;letter-spacing:-0.2px;">-</div>
<div class="t " style="left:487.10px;top:425.43px;font-size:10px;color:#2d93f5;letter-spacing:-0.2px;"><span style="font-size:9px;letter-spacing:0">入口</span>2</div>
<div class="t " style="left:591.00px;top:425.43px;font-size:10px;color:#4b4e54;letter-spacing:-0.2px;">2019-04-28 12:04:26</div>
<div class="t " style="left:730.30px;top:425.43px;font-size:10px;color:#5a5d63;letter-spacing:-0.2px;">-</div>
<div class="t " style="left:834.20px;top:425.43px;font-size:10px;color:#4b4e54;letter-spacing:-0.2px;">2021-02-09 12:22:45</div>
<div class="t" style="left:959.4px;width:91.4px;text-align:right;top:425.43px;font-size:10px;letter-spacing:-0.2px;color:#5a5d63">-</div>
<div class="t " style="left:1077.00px;top:425.43px;font-size:10px;color:#5a5d63;letter-spacing:-0.2px;">-</div>
<div class="t" style="left:1161.6px;width:139.1px;text-align:center;top:425.43px;font-size:10px;letter-spacing:-0.2px;color:#4b4e54"><span style="font-size:9px;letter-spacing:0">未正常出车</span></div>
<div class="t " style="left:179.70px;top:458.76px;font-size:10px;color:#4b4e54;letter-spacing:-0.2px;"><span style="font-size:9px;letter-spacing:0">豫</span>ANL007</div>
<div class="t " style="left:278.50px;top:458.76px;font-size:10px;color:#5f6268;letter-spacing:-0.2px;"><span style="font-size:9px;letter-spacing:0">临时车</span></div>
<div class="t " style="left:383.50px;top:458.76px;font-size:10px;color:#5a5d63;letter-spacing:-0.2px;">-</div>
<div class="t " style="left:487.10px;top:458.76px;font-size:10px;color:#2d93f5;letter-spacing:-0.2px;"><span style="font-size:9px;letter-spacing:0">入口</span>2</div>
<div class="t " style="left:591.00px;top:458.76px;font-size:10px;color:#4b4e54;letter-spacing:-0.2px;">2018-05-03 17:17:44</div>
<div class="t " style="left:730.30px;top:458.76px;font-size:10px;color:#5a5d63;letter-spacing:-0.2px;">-</div>
<div class="t " style="left:834.20px;top:458.76px;font-size:10px;color:#4b4e54;letter-spacing:-0.2px;">2021-02-05 12:04:07</div>
<div class="t" style="left:959.4px;width:91.4px;text-align:right;top:458.76px;font-size:10px;letter-spacing:-0.2px;color:#5a5d63">-</div>
<div class="t " style="left:1077.00px;top:458.76px;font-size:10px;color:#5a5d63;letter-spacing:-0.2px;">-</div>
<div class="t" style="left:1161.6px;width:139.1px;text-align:center;top:458.76px;font-size:10px;letter-spacing:-0.2px;color:#4b4e54"><span style="font-size:9px;letter-spacing:0">未正常出车</span></div>
<div class="t " style="left:179.70px;top:492.10px;font-size:10px;color:#4b4e54;letter-spacing:-0.2px;"><span style="font-size:9px;letter-spacing:0">青</span>AZH007</div>
<div class="t " style="left:278.50px;top:492.10px;font-size:10px;color:#5f6268;letter-spacing:-0.2px;"><span style="font-size:9px;letter-spacing:0">临时车</span></div>
<div class="t " style="left:383.50px;top:492.10px;font-size:10px;color:#5f6268;letter-spacing:-0.2px;"><span style="font-size:9px;letter-spacing:0">临时车</span></div>
<div class="t " style="left:487.10px;top:492.10px;font-size:10px;color:#2d93f5;letter-spacing:-0.2px;"><span style="font-size:9px;letter-spacing:0">入口</span>2</div>
<div class="t " style="left:591.00px;top:492.10px;font-size:10px;color:#4b4e54;letter-spacing:-0.2px;">2021-02-04 09:58:09</div>
<div class="t " style="left:730.30px;top:492.10px;font-size:10px;color:#2d93f5;letter-spacing:-0.2px;"><span style="font-size:9px;letter-spacing:0">出口</span>2</div>
<div class="t " style="left:834.20px;top:492.10px;font-size:10px;color:#4b4e54;letter-spacing:-0.2px;">2021-02-04 10:50:09</div>
<div class="t" style="left:959.4px;width:91.4px;text-align:right;top:492.10px;font-size:10px;letter-spacing:-0.2px;color:#4b4e54">52<span style="font-size:9px;letter-spacing:0">分</span>0<span style="font-size:9px;letter-spacing:0">秒</span></div>
<div class="t " style="left:1077.00px;top:492.10px;font-size:10px;color:#5a5d63;letter-spacing:-0.2px;">-</div>
<div class="t" style="left:1161.6px;width:139.1px;text-align:center;top:492.10px;font-size:10px;letter-spacing:-0.2px;color:#4b4e54"><span style="font-size:9px;letter-spacing:0">未正常缴费</span></div>
<div class="t " style="left:179.70px;top:525.43px;font-size:10px;color:#4b4e54;letter-spacing:-0.2px;"><span style="font-size:9px;letter-spacing:0">青</span>AZH007</div>
<div class="t " style="left:278.50px;top:525.43px;font-size:10px;color:#5f6268;letter-spacing:-0.2px;"><span style="font-size:9px;letter-spacing:0">临时车</span></div>
<div class="t " style="left:383.50px;top:525.43px;font-size:10px;color:#5a5d63;letter-spacing:-0.2px;">-</div>
<div class="t " style="left:487.10px;top:525.43px;font-size:10px;color:#2d93f5;letter-spacing:-0.2px;"><span style="font-size:9px;letter-spacing:0">入口</span>2</div>
<div class="t " style="left:591.00px;top:525.43px;font-size:10px;color:#4b4e54;letter-spacing:-0.2px;">2021-02-03 14:16:07</div>
<div class="t " style="left:730.30px;top:525.43px;font-size:10px;color:#5a5d63;letter-spacing:-0.2px;">-</div>
<div class="t " style="left:834.20px;top:525.43px;font-size:10px;color:#4b4e54;letter-spacing:-0.2px;">2021-02-04 09:58:09</div>
<div class="t" style="left:959.4px;width:91.4px;text-align:right;top:525.43px;font-size:10px;letter-spacing:-0.2px;color:#5a5d63">-</div>
<div class="t " style="left:1077.00px;top:525.43px;font-size:10px;color:#5a5d63;letter-spacing:-0.2px;">-</div>
<div class="t" style="left:1161.6px;width:139.1px;text-align:center;top:525.43px;font-size:10px;letter-spacing:-0.2px;color:#4b4e54"><span style="font-size:9px;letter-spacing:0">未正常出车</span></div>
<div class="t " style="left:179.70px;top:558.76px;font-size:10px;color:#4b4e54;letter-spacing:-0.2px;"><span style="font-size:9px;letter-spacing:0">青</span>AZH007</div>
<div class="t " style="left:278.50px;top:558.76px;font-size:10px;color:#5f6268;letter-spacing:-0.2px;"><span style="font-size:9px;letter-spacing:0">临时车</span></div>
<div class="t " style="left:383.50px;top:558.76px;font-size:10px;color:#5a5d63;letter-spacing:-0.2px;">-</div>
<div class="t " style="left:487.10px;top:558.76px;font-size:10px;color:#2d93f5;letter-spacing:-0.2px;"><span style="font-size:9px;letter-spacing:0">入口</span>2</div>
<div class="t " style="left:591.00px;top:558.76px;font-size:10px;color:#4b4e54;letter-spacing:-0.2px;">2021-02-02 17:12:31</div>
<div class="t " style="left:730.30px;top:558.76px;font-size:10px;color:#5a5d63;letter-spacing:-0.2px;">-</div>
<div class="t " style="left:834.20px;top:558.76px;font-size:10px;color:#4b4e54;letter-spacing:-0.2px;">2021-02-03 14:16:07</div>
<div class="t" style="left:959.4px;width:91.4px;text-align:right;top:558.76px;font-size:10px;letter-spacing:-0.2px;color:#5a5d63">-</div>
<div class="t " style="left:1077.00px;top:558.76px;font-size:10px;color:#5a5d63;letter-spacing:-0.2px;">-</div>
<div class="t" style="left:1161.6px;width:139.1px;text-align:center;top:558.76px;font-size:10px;letter-spacing:-0.2px;color:#4b4e54"><span style="font-size:9px;letter-spacing:0">未正常出车</span></div>
<div class="t " style="left:179.70px;top:592.10px;font-size:10px;color:#4b4e54;letter-spacing:-0.2px;"><span style="font-size:9px;letter-spacing:0">青</span>AZH007</div>
<div class="t " style="left:278.50px;top:592.10px;font-size:10px;color:#5f6268;letter-spacing:-0.2px;"><span style="font-size:9px;letter-spacing:0">临时车</span></div>
<div class="t " style="left:383.50px;top:592.10px;font-size:10px;color:#5a5d63;letter-spacing:-0.2px;">-</div>
<div class="t " style="left:487.10px;top:592.10px;font-size:10px;color:#2d93f5;letter-spacing:-0.2px;"><span style="font-size:9px;letter-spacing:0">入口</span>2</div>
<div class="t " style="left:591.00px;top:592.10px;font-size:10px;color:#4b4e54;letter-spacing:-0.2px;">2021-02-02 16:27:32</div>
<div class="t " style="left:730.30px;top:592.10px;font-size:10px;color:#5a5d63;letter-spacing:-0.2px;">-</div>
<div class="t " style="left:834.20px;top:592.10px;font-size:10px;color:#4b4e54;letter-spacing:-0.2px;">2021-02-02 17:12:31</div>
<div class="t" style="left:959.4px;width:91.4px;text-align:right;top:592.10px;font-size:10px;letter-spacing:-0.2px;color:#5a5d63">-</div>
<div class="t " style="left:1077.00px;top:592.10px;font-size:10px;color:#5a5d63;letter-spacing:-0.2px;">-</div>
<div class="t" style="left:1161.6px;width:139.1px;text-align:center;top:592.10px;font-size:10px;letter-spacing:-0.2px;color:#4b4e54"><span style="font-size:9px;letter-spacing:0">未正常出车</span></div>
<div class="t " style="left:179.70px;top:625.43px;font-size:10px;color:#4b4e54;letter-spacing:-0.2px;"><span style="font-size:9px;letter-spacing:0">青</span>AZH007</div>
<div class="t " style="left:278.50px;top:625.43px;font-size:10px;color:#5f6268;letter-spacing:-0.2px;"><span style="font-size:9px;letter-spacing:0">临时车</span></div>
<div class="t " style="left:383.50px;top:625.43px;font-size:10px;color:#5a5d63;letter-spacing:-0.2px;">-</div>
<div class="t " style="left:487.10px;top:625.43px;font-size:10px;color:#2d93f5;letter-spacing:-0.2px;"><span style="font-size:9px;letter-spacing:0">入口</span>2</div>
<div class="t " style="left:591.00px;top:625.43px;font-size:10px;color:#4b4e54;letter-spacing:-0.2px;">2021-02-02 16:21:09</div>
<div class="t " style="left:730.30px;top:625.43px;font-size:10px;color:#5a5d63;letter-spacing:-0.2px;">-</div>
<div class="t " style="left:834.20px;top:625.43px;font-size:10px;color:#4b4e54;letter-spacing:-0.2px;">2021-02-02 16:27:32</div>
<div class="t" style="left:959.4px;width:91.4px;text-align:right;top:625.43px;font-size:10px;letter-spacing:-0.2px;color:#5a5d63">-</div>
<div class="t " style="left:1077.00px;top:625.43px;font-size:10px;color:#5a5d63;letter-spacing:-0.2px;">-</div>
<div class="t" style="left:1161.6px;width:139.1px;text-align:center;top:625.43px;font-size:10px;letter-spacing:-0.2px;color:#4b4e54"><span style="font-size:9px;letter-spacing:0">未正常出车</span></div>
<div class="a" style="left:142.3px;top:479.6px;width:1154.7px;height:40px;border:3.3px solid #ff1a1a;border-radius:5px"></div>
</body></html>
